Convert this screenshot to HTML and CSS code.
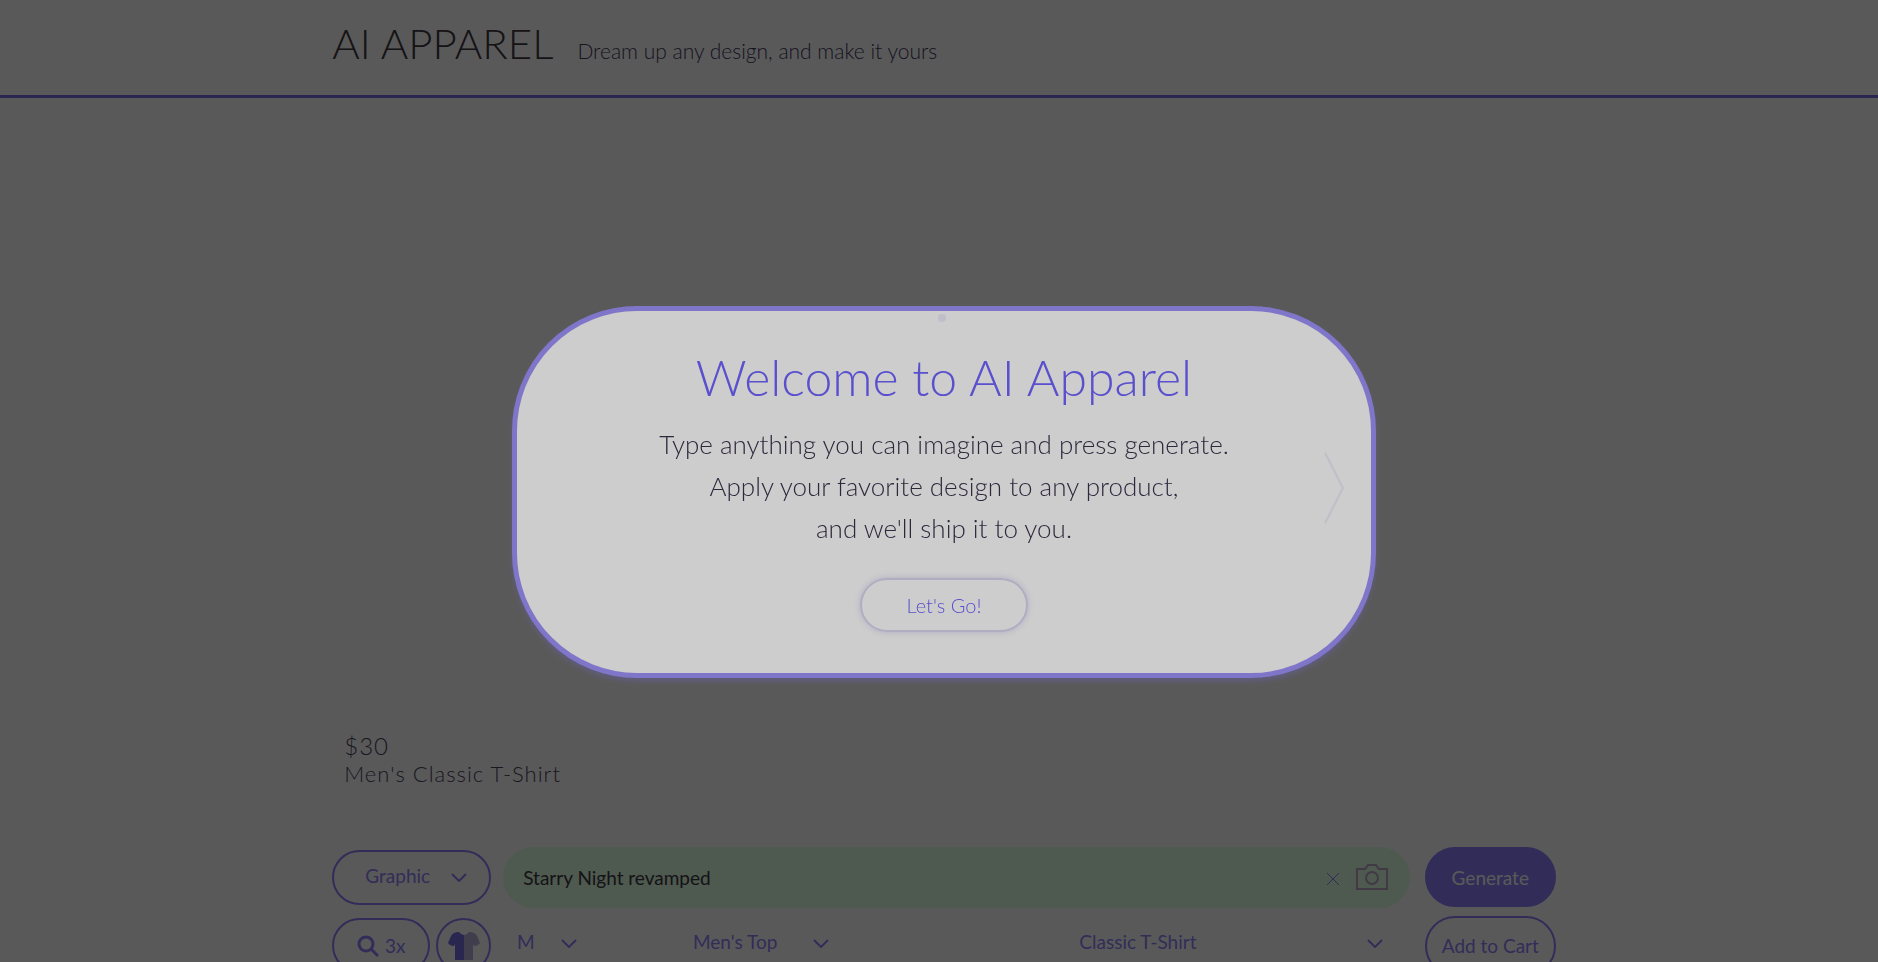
FILE: index.html
```
<!DOCTYPE html>
<html lang="en">
<head>
    <meta charset="UTF-8">
    <meta name="viewport" content="width=device-width, initial-scale=1.0">
    <title>AI Apparel</title>
    <link rel="stylesheet" href="styles.css">
</head>
<body>
    <!-- Header -->
    <header class="header">
        <div class="container header-inner">
            <h1 class="logo">AI APPAREL</h1>
            <p class="tagline">Dream up any design, and make it yours</p>
        </div>
    </header>

    <!-- Product and controls -->
    <main class="main">
        <div class="container">
            <section class="product">
                <p class="price">$30</p>
                <p class="product-name">Men's Classic T-Shirt</p>
            </section>

            <form class="controls">
                <div class="select-box pill">
                    <select class="select" aria-label="Style">
                        <option>Graphic</option>
                    </select>
                    <svg class="chevron" viewBox="0 0 16 9"><path d="M1 1l7 7 7-7"/></svg>
                </div>

                <div class="prompt">
                    <input class="prompt-input" type="text" value="Starry Night revamped" aria-label="Design prompt">
                    <button class="icon-button" type="button" aria-label="Clear">
                        <svg class="icon-clear" viewBox="0 0 14 18"><path d="M1 5l12 12M13 5L1 17"/></svg>
                    </button>
                    <button class="icon-button" type="button" aria-label="Upload image">
                        <svg class="icon-camera" viewBox="0 0 32 26">
                            <path d="M1 5h8l3-4h8l3 4h8v20H1z"/>
                            <circle cx="16" cy="14" r="6"/>
                        </svg>
                    </button>
                </div>

                <button class="button button-filled" type="button">Generate</button>

                <div class="tools">
                    <button class="pill zoom-button" type="button">
                        <svg class="icon-search" viewBox="0 0 22 22"><circle cx="9" cy="9" r="7"/><path d="M14 14l7 7"/></svg>
                        3x
                    </button>
                    <button class="pill shirt-button" type="button" aria-label="Shirt color">
                        <svg class="icon-shirt" viewBox="0 0 32 28">
                            <path d="M11 0Q5 0 3 4L0 11q2 3 6 3l1-2v16h9V3q-3 0-5-3z"/>
                            <path class="shirt-light" d="M21 0q6 0 8 4l3 7q-2 3-6 3l-1-2v16h-9V3q3 0 5-3z"/>
                        </svg>
                    </button>
                </div>

                <div class="options">
                    <div class="select-box size">
                        <select class="select" aria-label="Size">
                            <option>M</option>
                        </select>
                        <svg class="chevron" viewBox="0 0 16 9"><path d="M1 1l7 7 7-7"/></svg>
                    </div>
                    <div class="select-box">
                        <select class="select" aria-label="Category">
                            <option>Men's Top</option>
                        </select>
                        <svg class="chevron" viewBox="0 0 16 9"><path d="M1 1l7 7 7-7"/></svg>
                    </div>
                    <div class="select-box">
                        <select class="select" aria-label="Product">
                            <option>Classic T-Shirt</option>
                        </select>
                        <svg class="chevron" viewBox="0 0 16 9"><path d="M1 1l7 7 7-7"/></svg>
                    </div>
                </div>

                <button class="button" type="button">Add to Cart</button>
            </form>
        </div>
    </main>

    <!-- Welcome popup -->
    <div class="overlay">
        <div class="modal" role="dialog" aria-labelledby="welcome-title">
            <span class="dot"></span>
            <h2 class="modal-title" id="welcome-title">Welcome to AI Apparel</h2>
            <p class="modal-text">
                Type anything you can imagine and press generate.<br>
                Apply your favorite design to any product,<br>
                and we'll ship it to you.
            </p>
            <button class="go-button" type="button">Let's Go!</button>
            <button class="next-button" type="button" aria-label="Next">
                <svg class="icon-next" viewBox="0 0 22 74"><path d="M2 2l18 35L2 72"/></svg>
            </button>
        </div>
    </div>
</body>
</html>
```
FILE: styles.css
```
* {
    box-sizing: border-box;
}

body {
    margin: 0;
    min-height: 100vh;
    overflow: hidden;
    background-color: #fff;
    color: #4b4460;
    font-family: Lato, "Open Sans", sans-serif;
    font-weight: 300;
}

h1, h2, p {
    margin: 0;
    font-weight: 300;
}

button, input, select {
    font: inherit;
    color: #8f81fb;
}

button {
    cursor: pointer;
}

svg {
    display: block;
    fill: none;
    stroke: currentColor;
    stroke-width: 2;
}

.container {
    width: 65.5%;
    margin: 0 auto;
}

/* Header */
.header {
    padding: 16px 0 24px 10px;
    border-bottom: 3px solid #756de2;
}

.header-inner {
    display: flex;
    align-items: baseline;
    gap: 24px;
}

.logo {
    color: #403840;
    font-size: 42px;
    line-height: 55px;
}

.tagline {
    color: #403860;
    font-size: 21px;
}

/* Product */
.main {
    padding-left: 10px;
}

.product {
    display: flex;
    flex-direction: column;
    justify-content: flex-end;
    min-height: 72vh;
    padding: 0 0 3px 12px;
    letter-spacing: 1px;
    line-height: 28px;
}

.price {
    font-size: 24px;
}

.product-name {
    font-size: 22px;
}

/* Controls */
.controls {
    display: grid;
    grid-template-columns: 159px 1fr 131px;
    align-items: center;
    gap: 8px 12px;
    margin-top: 56px;
    color: #8f81fb;
    font-size: 19px;
    font-weight: 400;
}

.pill {
    height: 55px;
    border: 2px solid #8f81fb;
    border-radius: 28px;
    background: none;
}

.select-box {
    position: relative;
    display: flex;
    align-items: center;
}

.select {
    width: 100%;
    height: 100%;
    padding: 0 28px 4px 0;
    border: 0;
    background: none;
    appearance: none;
    text-align: center;
}

.options .select {
    padding: 0 0 4px;
}

.options .size .select {
    padding-right: 42px;
}

.chevron {
    position: absolute;
    right: 13px;
    width: 16px;
    pointer-events: none;
}

.pill .chevron {
    right: 22px;
}

.prompt {
    display: flex;
    align-items: center;
    gap: 16px;
    height: 61px;
    margin-right: 3px;
    padding: 0 22px 0 20px;
    border-radius: 31px;
    background-color: #dffee5;
}

.prompt-input {
    flex: 1;
    min-width: 0;
    padding: 0;
    border: 0;
    background: none;
    color: #403840;
}

.icon-button {
    padding: 0;
    border: 0;
    background: none;
}

.icon-clear {
    width: 14px;
    stroke-width: 1;
}

.icon-camera {
    width: 32px;
    color: #b9a4c4;
}

.button {
    height: 60px;
    padding: 0;
    border: 2px solid #8f81fb;
    border-radius: 30px;
    background: none;
}

.button-filled {
    background-color: #8f81fb;
    color: #fff;
}

.tools {
    display: flex;
    gap: 6px;
}

.zoom-button {
    display: flex;
    flex: 1;
    align-items: center;
    justify-content: center;
    gap: 6px;
    padding: 0;
}

.icon-search {
    width: 22px;
    stroke-width: 3;
}

.shirt-button {
    display: flex;
    align-items: center;
    justify-content: center;
    width: 55px;
    padding: 0;
}

.icon-shirt {
    width: 32px;
    fill: #756de2;
    stroke: none;
}

.shirt-light {
    fill: #b8b0dc;
}

.options {
    display: grid;
    grid-template-columns: 87px 214fr 516fr;
    gap: 38px;
    padding: 0 17px 4px 0;
}

/* Welcome popup */
.overlay {
    position: fixed;
    inset: 0;
    display: flex;
    align-items: center;
    justify-content: center;
    padding: 22px 0 0 10px;
    background-color: rgba(0, 0, 0, 0.65);
}

.modal {
    position: relative;
    display: flex;
    flex-direction: column;
    align-items: center;
    width: 46vw;
    padding: 30px 60px 41px;
    border: 5px solid #7f76ca;
    border-radius: 125px;
    background-color: #cdcdcd;
    box-shadow: 0 4px 4px #5f5c78;
    text-align: center;
}

.dot {
    position: absolute;
    top: 3px;
    left: calc(50% - 6px);
    width: 8px;
    height: 8px;
    border-radius: 50%;
    background-color: #c0bec9;
}

.modal-title {
    color: #5a50cd;
    font-size: 50px;
    line-height: 72px;
}

.modal-text {
    margin-top: 10px;
    color: #2e283c;
    font-size: 26px;
    line-height: 42px;
}

.go-button {
    width: 168px;
    height: 54px;
    margin-top: 29px;
    border: 2px solid #b0adc2;
    border-radius: 27px;
    background: none;
    box-shadow: 0 0 6px #b0adc2;
    color: #5a50cd;
    font-size: 20px;
}

.next-button {
    position: absolute;
    top: 49%;
    right: 26px;
    padding: 0;
    border: 0;
    background: none;
    color: #c0bec9;
    transform: translateY(-50%);
}

.icon-next {
    width: 22px;
}
```
